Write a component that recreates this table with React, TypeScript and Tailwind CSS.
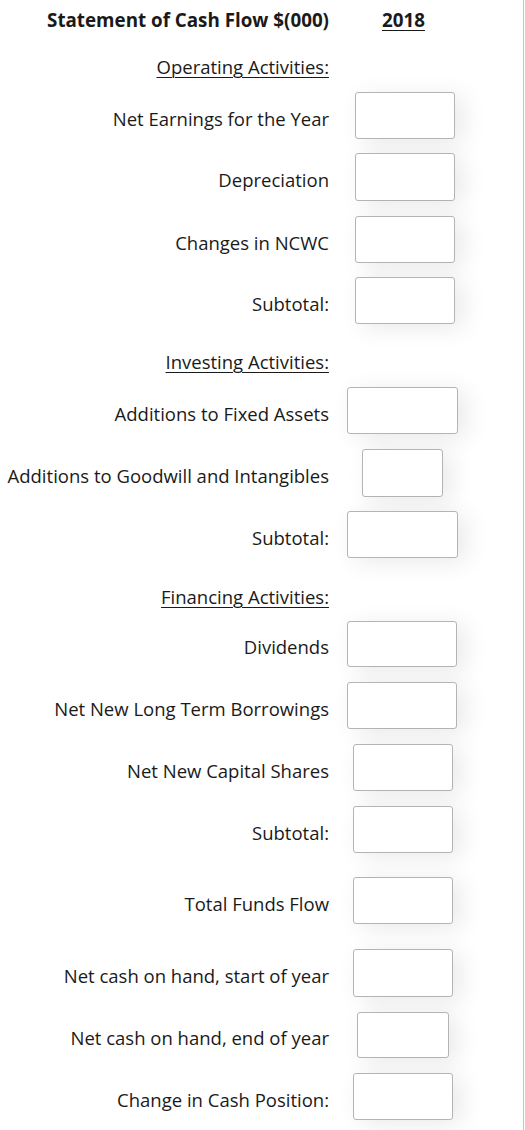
import React from "react";

type Row =
  | { kind: "heading"; text: string; cls: string }
  | { kind: "field"; label: string; row: string; box: string };

const rows: Row[] = [
  { kind: "heading", text: "Operating Activities:", cls: "mt-[15px]" },
  { kind: "field", label: "Net Earnings for the Year", row: "mt-[13px] h-[47px]", box: "ml-[26px] w-[100px]" },
  { kind: "field", label: "Depreciation", row: "mt-[14px] h-[48px]", box: "ml-[26px] w-[100px]" },
  { kind: "field", label: "Changes in NCWC", row: "mt-[15px] h-[47px]", box: "ml-[26px] w-[100px]" },
  { kind: "field", label: "Subtotal:", row: "mt-[14px] h-[47px]", box: "ml-[26px] w-[100px]" },
  { kind: "heading", text: "Investing Activities:", cls: "mt-[26px]" },
  { kind: "field", label: "Additions to Fixed Assets", row: "mt-[13px] h-[47px]", box: "ml-[18px] w-[111px]" },
  { kind: "field", label: "Additions to Goodwill and Intangibles", row: "mt-[15px] h-[48px]", box: "ml-[33px] w-[81px]" },
  { kind: "field", label: "Subtotal:", row: "mt-[14px] h-[47px]", box: "ml-[18px] w-[111px]" },
  { kind: "heading", text: "Financing Activities:", cls: "mt-[27px]" },
  { kind: "field", label: "Dividends", row: "mt-[12px] h-[46px]", box: "ml-[18px] w-[110px]" },
  { kind: "field", label: "Net New Long Term Borrowings", row: "mt-[15px] h-[47px]", box: "ml-[18px] w-[110px]" },
  { kind: "field", label: "Net New Capital Shares", row: "mt-[15px] h-[47px]", box: "ml-[24px] w-[100px]" },
  { kind: "field", label: "Subtotal:", row: "mt-[15px] h-[47px]", box: "ml-[24px] w-[100px]" },
  { kind: "field", label: "Total Funds Flow", row: "mt-[24px] h-[47px]", box: "ml-[24px] w-[100px]" },
  { kind: "field", label: "Net cash on hand, start of year", row: "mt-[25px] h-[48px]", box: "ml-[24px] w-[100px]" },
  { kind: "field", label: "Net cash on hand, end of year", row: "mt-[15px] h-[46px]", box: "ml-[28px] w-[92px]" },
  { kind: "field", label: "Change in Cash Position:", row: "mt-[15px] h-[47px]", box: "ml-[24px] w-[100px]" },
];

export default function App() {
  return (
    <div className="w-[524px] min-h-[1130px] bg-white border-r border-[#c4c4c4] text-[#1a1a1a] text-[18.5px] font-['Open_Sans','Noto_Sans',sans-serif]">
      <div className="flex h-[40px] items-center">
        <div className="w-[329px] shrink-0 whitespace-nowrap text-right text-[18.8px] font-bold">
          Statement of Cash Flow $(000)
        </div>
        <div className="ml-[53px] text-[18.8px] font-bold underline underline-offset-[3px]">2018</div>
      </div>
      {rows.map((r, i) =>
        r.kind === "heading" ? (
          <div key={i} className={`flex h-[24px] items-center ${r.cls}`}>
            <div className="w-[329px] shrink-0 text-right underline underline-offset-[3px] decoration-[1px]">
              {r.text}
            </div>
          </div>
        ) : (
          <div key={i} className={`flex items-center ${r.row}`}>
            <div className="w-[329px] shrink-0 whitespace-nowrap pt-[6px] text-right">{r.label}</div>
            <div
              className={`h-full shrink-0 rounded-[3px] border border-[#b4b4b4] bg-white shadow-[8px_4px_24px_rgba(0,0,0,0.09)] ${r.box}`}
            />
          </div>
        )
      )}
    </div>
  );
}
